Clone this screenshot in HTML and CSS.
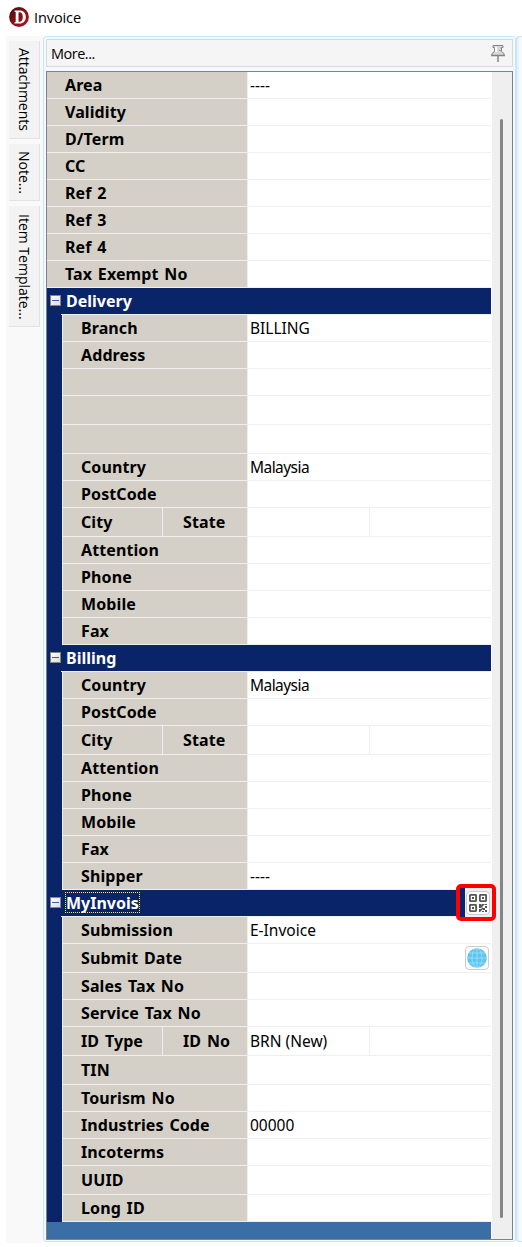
FILE: index.html
```html
<!DOCTYPE html>
<html lang="en">
<head>
<meta charset="utf-8">
<title>Invoice</title>
<link rel="stylesheet" href="styles.css">
</head>
<body>
<header class="titlebar">
  <svg class="logo" width="20" height="20" viewBox="0 0 20 20"><defs><linearGradient id="red" x1="0" y1="0" x2="1" y2="1"><stop offset="0" stop-color="#3c0c0e"/><stop offset=".45" stop-color="#7d1116"/><stop offset="1" stop-color="#b5161e"/></linearGradient></defs><circle cx="10" cy="10" r="9.900" fill="url(#red)"/><path d="M5.500 3.500h5c4 0 6.300 2.500 6.300 6.500s-2.300 6.500-6.300 6.500h-5v-1.200l1.200-.3v-10l-1.200-.3zM9.500 5.200v9.600h1c2.200 0 3.300-1.700 3.300-4.800s-1.100-4.800-3.300-4.800z" fill="#fff" fill-rule="evenodd"/></svg>
  <span>Invoice</span>
</header>
<main class="workspace">
  <nav class="tabs">
    <div class="tab tab-attach"><span>Attachments</span></div>
    <div class="tab tab-note"><span>Note...</span></div>
    <div class="tab tab-item"><span>Item Template...</span></div>
  </nav>
  <section class="dock">
    <div class="dock-head"><span>More...</span>
      <svg width="14" height="17" viewBox="0 0 14 17"><path d="M2 .5h10v2h-1.500v4l2.500 2v2H1v-2l2.500-2v-4H2z" fill="#d9d9d9" stroke="#858585"/><path d="M5 2v5" stroke="#fff" stroke-width="2"/><path d="M9 2.500l1 1M8 5l2 1" stroke="#8f8f8f"/><path d="M0 10.500h14M7 11v6" stroke="#858585" stroke-width="1.500"/></svg>
    </div>
    <div class="panel">
      <div class="grid">
        <div class="group root">
          <div class="row"><b>Area</b><span>----</span></div>
          <div class="row"><b>Validity</b><span></span></div>
          <div class="row"><b>D/Term</b><span></span></div>
          <div class="row"><b>CC</b><span></span></div>
          <div class="row"><b>Ref 2</b><span></span></div>
          <div class="row"><b>Ref 3</b><span></span></div>
          <div class="row"><b>Ref 4</b><span></span></div>
          <div class="row"><b>Tax Exempt No</b><span></span></div>
        </div>
        <div class="category"><i class="toggle"></i><b>Delivery</b></div>
        <div class="group">
          <div class="row"><b>Branch</b><span>BILLING</span></div>
          <div class="row"><b>Address</b><span></span></div>
          <div class="row"><b></b><span></span></div>
          <div class="row tall"><b></b><span></span></div>
          <div class="row tall"><b></b><span></span></div>
          <div class="row"><b>Country</b><span class="tight">Malaysia</span></div>
          <div class="row"><b>PostCode</b><span></span></div>
          <div class="row tall split"><b>City</b><b>State</b><span></span><span></span></div>
          <div class="row"><b>Attention</b><span></span></div>
          <div class="row"><b>Phone</b><span></span></div>
          <div class="row"><b>Mobile</b><span></span></div>
          <div class="row"><b>Fax</b><span></span></div>
        </div>
        <div class="category"><i class="toggle"></i><b>Billing</b></div>
        <div class="group">
          <div class="row"><b>Country</b><span class="tight">Malaysia</span></div>
          <div class="row"><b>PostCode</b><span></span></div>
          <div class="row tall split"><b>City</b><b>State</b><span></span><span></span></div>
          <div class="row"><b>Attention</b><span></span></div>
          <div class="row"><b>Phone</b><span></span></div>
          <div class="row"><b>Mobile</b><span></span></div>
          <div class="row"><b>Fax</b><span></span></div>
          <div class="row"><b>Shipper</b><span>----</span></div>
        </div>
        <div class="category"><i class="toggle"></i><b class="focused">MyInvois</b>
          <div class="highlight"><div class="icon-btn"><svg width="18" height="18" viewBox="0 0 18 18"><g fill="none" stroke="#555" stroke-width="1.800"><rect x=".9" y=".9" width="6.200" height="6.200" rx=".5"/><rect x="10.900" y=".9" width="6.200" height="6.200" rx=".5"/><rect x=".9" y="10.900" width="6.200" height="6.200" rx=".5"/></g><path d="M3 3h2v2H3zM13 3h2v2h-2zM3 13h2v2H3zM10 10h2v2h-2zM13 10h3l-4 4h-2v-2h1zM16 12h2v2h-2zM14 14h2v2h-2zM10 15h2l2-2v2l-3 3h-1zM16 10h2v1h-2zM13 17h2v1h-2zM16 16h2v2h-2z" fill="#555"/></svg></div></div>
        </div>
        <div class="group">
          <div class="row"><b>Submission</b><span>E-Invoice</span></div>
          <div class="row tall"><b>Submit Date</b><span class="with-btn"><span class="icon-btn"><svg width="20" height="20" viewBox="0 0 20 20"><circle cx="10" cy="10" r="9.800" fill="#5cc5f2"/><g fill="none" stroke="#a5e1fa" stroke-width=".8"><path d="M10 0v20M0 10h20M2 5h16M2 15h16"/><ellipse cx="10" cy="10" rx="5" ry="9.600"/></g></svg></span></span></div>
          <div class="row"><b>Sales Tax No</b><span></span></div>
          <div class="row"><b>Service Tax No</b><span></span></div>
          <div class="row tall split"><b>ID Type</b><b>ID No</b><span>BRN (New)</span><span></span></div>
          <div class="row tall"><b>TIN</b><span></span></div>
          <div class="row"><b>Tourism No</b><span></span></div>
          <div class="row"><b>Industries Code</b><span>00000</span></div>
          <div class="row"><b>Incoterms</b><span></span></div>
          <div class="row tall"><b>UUID</b><span></span></div>
          <div class="row"><b>Long ID</b><span></span></div>
        </div>
        <div class="grid-foot"></div>
      </div>
      <div class="scroll"><div class="thumb"></div></div>
    </div>
  </section>
  <div class="next-dock"></div>
</main>
</body>
</html>
```

FILE: styles.css
```css
* { box-sizing: border-box; }
body { margin: 0; width: 522px; height: 1247px; background: #fff; color: #000; font: 15.5px/20px "Noto Sans", sans-serif; overflow: hidden; }
.titlebar { height: 36px; padding: 7px 0 0 9px; display: flex; gap: 5px; font: 14.5px/22px "Open Sans", sans-serif; letter-spacing: -.1px; }
.workspace { display: flex; height: 1207px; padding-left: 6px; }
.tabs { width: 37px; background: #f9f9f9; padding: 5px 0 0 3px; display: flex; flex-direction: column; gap: 5px; }
.tab { width: 31px; background: #f3f3f3; border: solid #e2e2e2; border-width: 0 1px 1px 0; padding: 7px 0 0; font: 14px/30px "Open Sans", sans-serif; writing-mode: vertical-rl; white-space: nowrap; }
.tab-attach { height: 98px; }
.tab-note { height: 57px; }
.tab-item { height: 121px; padding-top: 8px; }
.dock { width: 473px; height: 1206px; background: #f3f9fd; border: 1px solid #c6e6fc; border-radius: 3px; padding: 2px 2px 0 2px; }
.dock-head { width: 467px; height: 28px; background: #f5f5f5; border: 1px solid #d9d9d9; display: flex; justify-content: space-between; padding: 4px 7px 0 4px; font: 14.5px/20px "Open Sans", sans-serif; letter-spacing: -.5px; }
.dock-head svg { margin-top: 1px; }
.panel { width: 467px; height: 1169px; margin-top: 4px; border: 1px solid #7f8287; display: flex; background: #efefef; }
.grid { width: 444px; flex: none; }
.group { background: #0a246a; padding-left: 15px; }
.group.root { padding-left: 0; }
.row { height: 27px; display: grid; grid-template-columns: 186px 1fr; grid-template-rows: 100%; border-bottom: 1px solid #efefef; line-height: 27px; }
.root .row { grid-template-columns: 201px 1fr; }
.row.tall { height: 29px; line-height: 29px; }
.row.split { grid-template-columns: 101px 85px 122px 1fr; }
.row b { background: #d4d0c8; border-right: 1px solid #efefef; padding-left: 18px; font-size: 16px; letter-spacing: .1px; word-spacing: 1.5px; white-space: nowrap; }
.group:not(.root) .row b:first-child { border-left: 1px solid #efefef; }
.row.split b + b { padding-left: 20px; }
.row > span { background: #fff; padding-left: 2px; }
.row > .tight { letter-spacing: -.55px; }
.row.split span:nth-child(3) { border-right: 1px solid #efefef; }
.category { height: 27px; background: #0a246a; color: #fff; display: flex; padding: 3px 0 0 3px; line-height: 21px; position: relative; border-bottom: 1px solid #efefef; border-image: linear-gradient(90deg, #0a246a 15px, #efefef 15px) 1; }
.category b { margin-left: 5px; font-size: 16px; }
.toggle { width: 11px; height: 11px; margin-top: 4px; background: linear-gradient(#3c5daa, #3c5daa) center / 7px 1px no-repeat, linear-gradient(135deg, #fff, #ddd); border: 1px solid #858585; }
.focused { height: 19px; outline: 1px dotted #f5db95; }
.highlight { position: absolute; left: 409px; top: -6px; width: 40px; height: 37px; border: 4px solid #f00; border-radius: 5px; background: linear-gradient(90deg, #0a246a 5px, #efefef 5px); padding: 3px 0 0 6px; z-index: 2; }
.icon-btn { width: 24px; height: 24px; background: #fcfcfc; border: 1px solid #ccc; border-radius: 4px; display: flex; align-items: center; justify-content: center; }
.with-btn { display: flex; justify-content: flex-end; padding: 2px 2px 0 0; }
.grid-foot { height: 17px; background: #3a6ea5; }
.scroll { width: 21px; border-left: 1px solid #fff; padding: 47px 0 0 8px; }
.thumb { width: 3px; height: 1099px; border-radius: 2px; background: #858585; }
.next-dock { flex: 1; height: 1206px; border: solid #c6e6fc; border-width: 1px 0 1px 1px; border-radius: 3px 0 0 3px; background: #f9f9f9; box-shadow: inset 2px 0 #e3f2fc; }
```
